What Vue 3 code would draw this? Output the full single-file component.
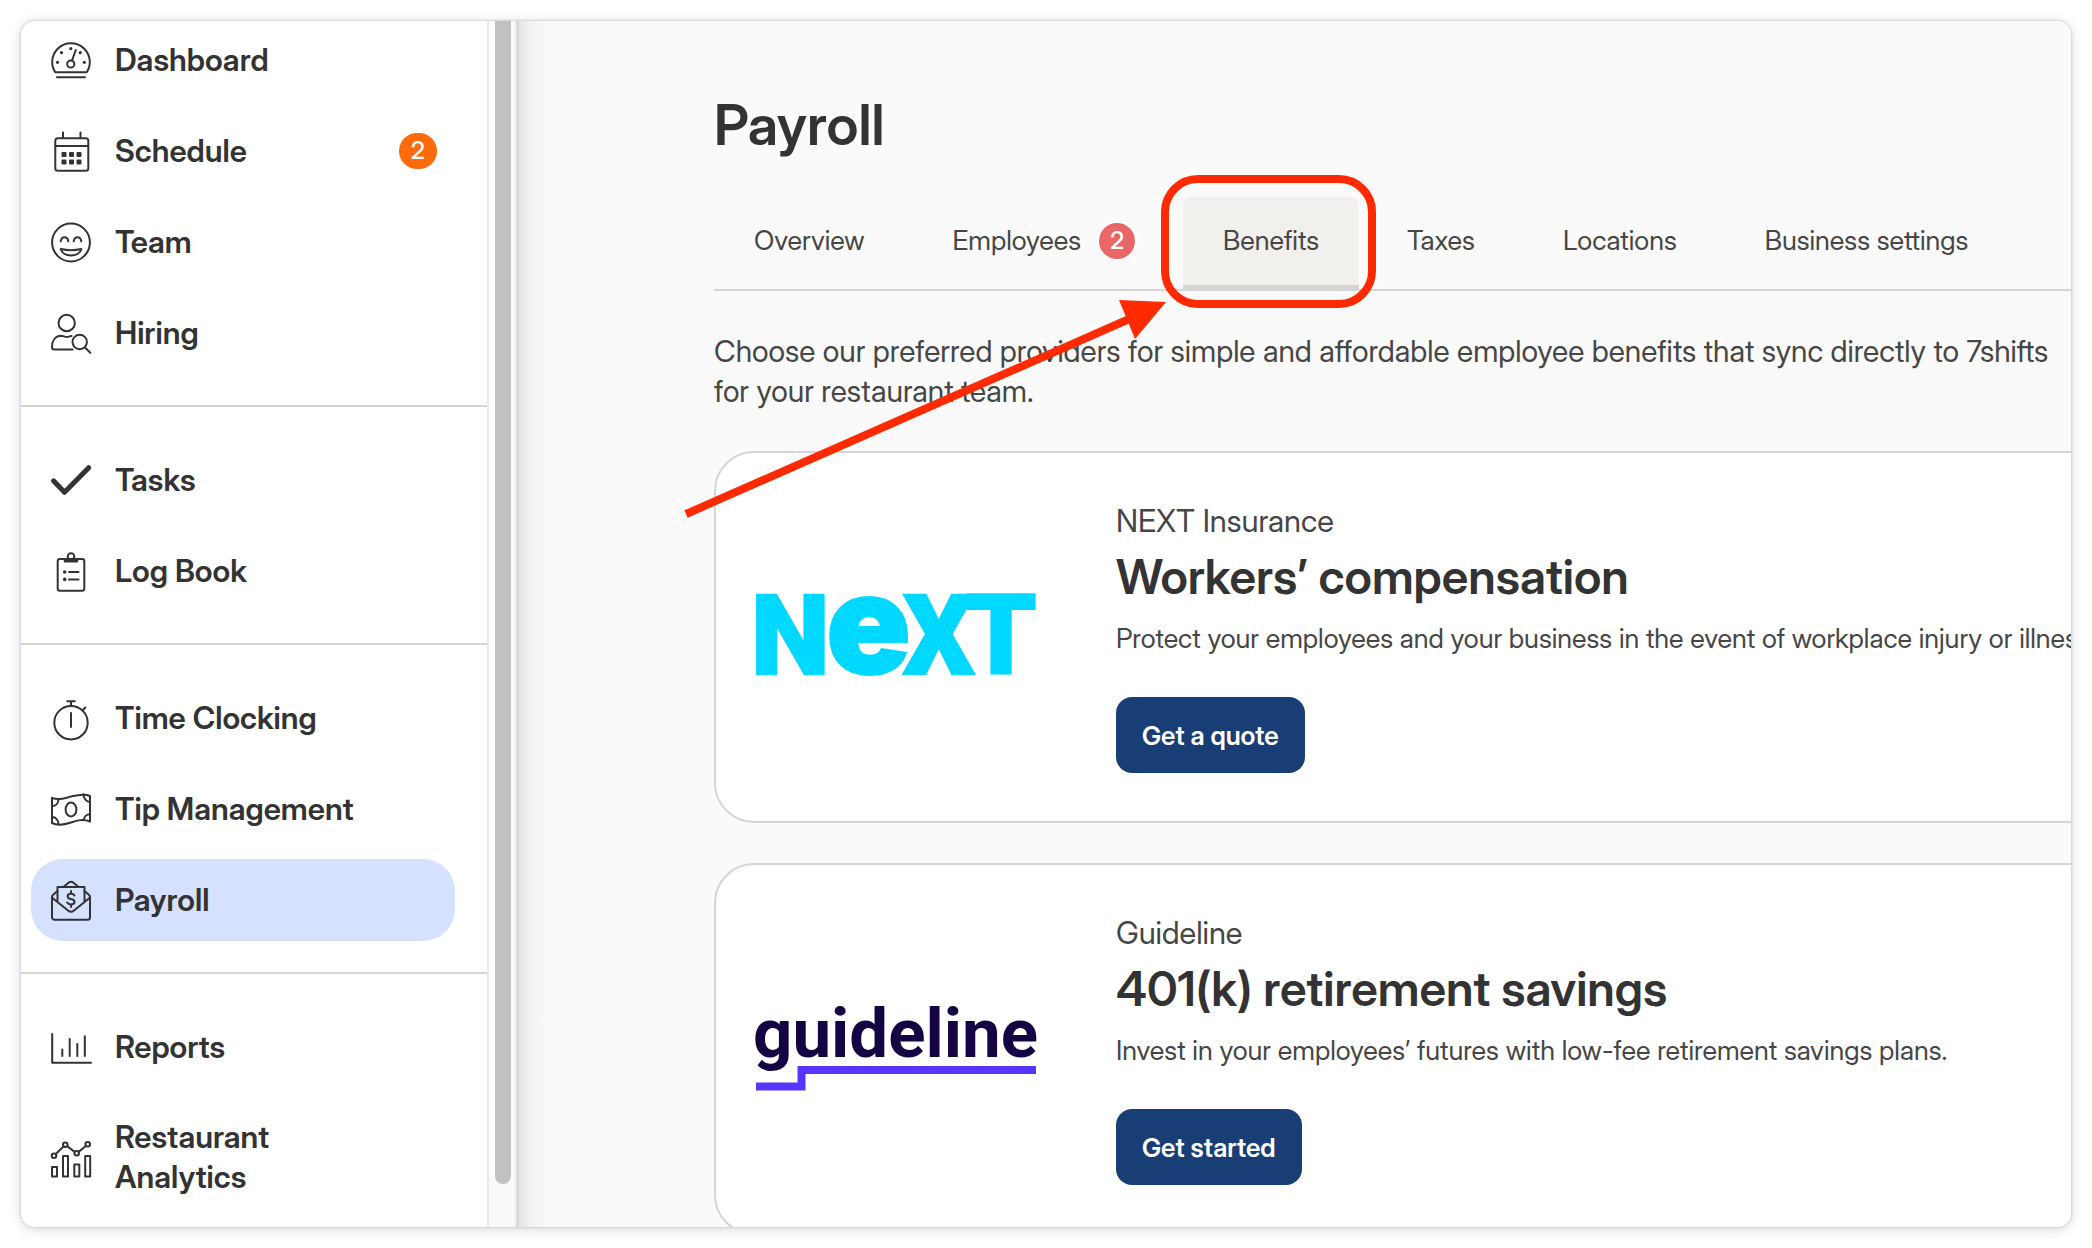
<script setup>
const groups = [
  [
    { label: 'Dashboard', icon: 'dashboard' },
    { label: 'Schedule', icon: 'schedule', badge: 2 },
    { label: 'Team', icon: 'team' },
    { label: 'Hiring', icon: 'hiring' },
  ],
  [
    { label: 'Tasks', icon: 'tasks' },
    { label: 'Log Book', icon: 'log' },
  ],
  [
    { label: 'Time Clocking', icon: 'clock' },
    { label: 'Tip Management', icon: 'tip' },
    { label: 'Payroll', icon: 'payroll', active: true },
  ],
  [
    { label: 'Reports', icon: 'reports' },
    { label: 'Restaurant Analytics', icon: 'analytics' },
  ],
]

const icons = {
  dashboard: `<path d="M4.5 32.3C2.2 29.5 1.2 26 1.2 22a18.8 18.8 0 0 1 37.6 0c0 4-1 7.500-3.300 10.300z"/><path d="M6 37.200h28M21 20.500 24.800 10"/><circle cx="19.800" cy="24" r="3.600"/><g class="solid"><circle cx="6.500" cy="22.300" r="1.600"/><circle cx="10.500" cy="12.700" r="1.600"/><circle cx="19.800" cy="8.700" r="1.600"/><circle cx="29.300" cy="12.700" r="1.600"/><circle cx="33.300" cy="22.300" r="1.600"/></g>`,
  schedule: `<rect x="4.300" y="7.300" width="33" height="32.400" rx="2.500"/><path d="M4.300 15h33M12 1.500v5.500M29.500 1.500v5.500"/><g class="solid"><rect x="10.500" y="21" width="5" height="5" rx="1"/><rect x="18" y="21" width="5" height="5" rx="1"/><rect x="25.500" y="21" width="5" height="5" rx="1"/><rect x="10.500" y="28.500" width="5" height="5" rx="1"/><rect x="18" y="28.500" width="5" height="5" rx="1"/><rect x="25.500" y="28.500" width="5" height="5" rx="1"/></g>`,
  team: `<circle cx="20" cy="20.500" r="18.900"/><path d="M9.700 19.300c.8-5.500 6.800-5.500 7.600 0M22.700 19.300c.8-5.500 6.800-5.500 7.600 0M9.800 27c6.500 1.500 14 1.500 20.500 0-1.500 8.500-19 8.500-20.500 0z"/>`,
  hiring: `<circle cx="15.700" cy="10" r="8.200"/><path d="M21.500 36.500H3.500C2 36.500 1 35.700 1 34.200 1 28 4 23 10 22.800c2.500 0 3.300 1.200 5.700 1.200 2 0 3-.8 4.800-1.100M34 34.500l5.300 5.300"/><circle cx="28.700" cy="29" r="7.200"/>`,
  tasks: `<path class="heavy" d="M2.500 20.800 13.500 32.300 37.700 7.700"/>`,
  log: `<rect x="6.700" y="8" width="26.600" height="31.700" rx="2.200"/><circle cx="20" cy="5.500" r="3.300"/><path class="solid" d="M12.700 7.500h14.600v2.500a1.500 1.500 0 0 1-1.500 1.500H14.200a1.500 1.500 0 0 1-1.500-1.500z"/><path d="M18 21h9.500M18 28.400h9.500"/><g class="solid"><circle cx="13.700" cy="21" r="1.800"/><circle cx="13.700" cy="28.400" r="1.800"/></g>`,
  clock: `<circle cx="20" cy="24.700" r="16.700"/><path d="M16.300 3.300h7.400M20 3.500V8M31.500 12.500l2.800-3M20 15v14"/>`,
  tip: `<path d="M1 8.800C8 12 14 9 20 7.500S33 4 39 7v25.500C32 29.500 26 31.500 20 33.500S7 37 1 34z"/><ellipse cx="20" cy="20.500" rx="5.400" ry="7"/><path d="M7.500 10.500C7.300 14 5 17 1.200 17M32.500 5.200c0 4 3 7.800 6.400 7.800M39 25.300c-3.500 0-6 2.500-6.300 5.700M1.200 28c3.500 0 6.300 3 6.300 7.300"/>`,
  payroll: `<path d="M6.500 11 1.900 15c-.6.600-.9 1.200-.9 2v20.200A2.500 2.500 0 0 0 3.500 39.700h33a2.500 2.500 0 0 0 2.500-2.500V17c0-.8-.3-1.400-.9-2L33.500 11"/><path d="M1.500 18 17 30.500c2 1.700 4 1.700 6 0L38.500 18M6.500 21.500V7h27v14.500M13 6.500l4.500-3.800c1.600-1.300 3.400-1.300 5 0L27 6.500M23.500 15.500c-.6-1.200-1.800-1.700-3.500-1.700-4.300 0-4.600 4.600 0 5.200 4.800.6 4.600 5.400 0 5.400-1.800 0-3.200-.6-3.800-1.900M20 11v2.800M20 24.400v2.600"/>`,
  reports: `<path d="M1.200 7v28.700H40M11.300 22.500v6.500M18.700 12v17M26.300 17v12M33.800 9.300V29"/>`,
  analytics: `<path d="M4.800 17 12.700 9.300M16.200 9.200l7.500 5.700M27.500 14.900l7.400-5.900"/><circle cx="3" cy="18.700" r="2.300"/><circle cx="14.300" cy="7.700" r="2.300"/><circle cx="25.700" cy="16.300" r="2.300"/><circle cx="36.700" cy="7.300" r="2.300"/><path d="M1 30h5v9.500H1zM12 19h5v20.500h-5zM23.300 27.500h5v12h-5zM34.200 19h5v20.500h-5z"/>`,
}

const tabs = [
  { label: 'Overview' },
  { label: 'Employees', badge: 2 },
  { label: 'Benefits', active: true },
  { label: 'Taxes' },
  { label: 'Locations' },
  { label: 'Business settings' },
]

const offers = [
  {
    logo: 'next',
    provider: 'NEXT Insurance',
    title: 'Workers’ compensation',
    text: 'Protect your employees and your business in the event of workplace injury or illness.',
    action: 'Get a quote',
  },
  {
    logo: 'guideline',
    provider: 'Guideline',
    title: '401(k) retirement savings',
    text: 'Invest in your employees’ futures with low-fee retirement savings plans.',
    action: 'Get started',
  },
]
</script>

<template>
  <div class="page">
    <div class="frame">
      <aside class="sidebar">
        <nav class="menu" aria-label="Main">
          <ul v-for="(group, i) in groups" :key="i" class="group">
            <li v-for="item in group" :key="item.label">
              <a href="#" class="item" :class="{ active: item.active }">
                <svg class="icon" viewBox="0 0 40 40" aria-hidden="true" v-html="icons[item.icon]"></svg>
                <span class="label">{{ item.label }}</span>
                <span v-if="item.badge" class="count">{{ item.badge }}</span>
              </a>
            </li>
          </ul>
        </nav>
        <div class="track"><div class="thumb"></div></div>
      </aside>

      <main class="main">
        <h1>Payroll</h1>
        <nav class="tabs" aria-label="Payroll">
          <a v-for="tab in tabs" :key="tab.label" href="#" class="tab" :class="{ current: tab.active }">
            {{ tab.label }}
            <span v-if="tab.badge" class="alert">{{ tab.badge }}</span>
            <span v-if="tab.active" class="ring"></span>
          </a>
        </nav>
        <p class="intro">
          Choose our preferred providers for simple and affordable employee benefits that sync directly to 7shifts<br />
          for your restaurant team.
        </p>

        <section v-for="offer in offers" :key="offer.title" class="card">
          <svg v-if="offer.logo === 'next'" class="logo" viewBox="0 0 280 100" role="img" aria-label="NEXT">
            <text class="next" y="87"><tspan x="-5">N</tspan><tspan class="next-e" x="70">e</tspan><tspan x="147">X</tspan><tspan x="210">T</tspan></text>
          </svg>
          <svg v-else class="logo" viewBox="0 0 280 100" role="img" aria-label="guideline">
            <text class="guideline" x="-3" y="58">guideline</text>
            <path d="M0 87.500H45.500V71H280" fill="none" stroke="#5735ff" stroke-width="8" />
          </svg>
          <div class="details">
            <p class="provider">{{ offer.provider }}</p>
            <h2>{{ offer.title }}</h2>
            <p class="text">{{ offer.text }}</p>
            <button type="button">{{ offer.action }}</button>
          </div>
        </section>
      </main>

      <svg class="arrow" viewBox="0 0 480 216" aria-hidden="true">
        <path d="M0 212 450 14" stroke="#ff2a00" stroke-width="8" />
        <path d="M433 -2 480 0 449 37z" fill="#ff2a00" />
      </svg>
    </div>
  </div>
</template>

<style>
body {
  margin: 0;
  background: #fff;
}
</style>

<style scoped>
.page {
  box-sizing: border-box;
  height: 100vh;
  padding: 21px;
  font-family: "Inter Display", Inter, "Liberation Sans", sans-serif;
  color: #464646;
}

.frame {
  position: relative;
  display: flex;
  height: 100%;
  overflow: hidden;
  border-radius: 14px;
  background: #fafafa;
  box-shadow: 0 0 2px 1px #d0d3d8, 0 2px 12px rgba(60, 70, 90, 0.22);
}

.sidebar {
  display: flex;
  flex: none;
  width: 496px;
  border-right: 2px solid #d5d5d5;
  background: #fff;
}

.menu {
  flex: 1;
  margin-top: -2px;
}

.group {
  display: flex;
  flex-direction: column;
  gap: 9px;
  margin: 0;
  padding: 32px 32px 31px 10px;
  list-style: none;
}

.group:first-child {
  padding-top: 0;
}

.group + .group {
  border-top: 2px solid #d5d5d5;
}

.item {
  box-sizing: border-box;
  display: flex;
  align-items: center;
  gap: 24px;
  min-height: 82px;
  padding: 20px 18px 20px 20px;
  border-radius: 32px;
  color: #333;
  font-size: 31px;
  font-weight: 600;
  line-height: 40px;
  text-decoration: none;
}

.item.active {
  background: #d6e0ff;
}

.icon {
  flex: none;
  width: 40px;
  height: 40px;
  overflow: visible;
  fill: none;
  stroke: #333;
  stroke-width: 2;
  stroke-linecap: round;
  stroke-linejoin: round;
}

.icon :deep(.solid) {
  fill: #333;
  stroke: none;
}

.icon :deep(.heavy) {
  stroke-width: 5;
}

.label {
  max-width: 260px;
  margin-right: auto;
}

.count {
  width: 38px;
  border-radius: 18px;
  background: #ff6a0a;
  color: #fff;
  font-size: 24px;
  font-weight: 500;
  line-height: 36px;
  text-align: center;
}

.track {
  box-sizing: border-box;
  width: 30px;
  padding: 0 4px 43px 6px;
  border: solid #e8e8e8;
  border-width: 0 2px;
  background: #fafafa;
}

.thumb {
  width: 16px;
  height: 100%;
  border-radius: 0 0 8px 8px;
  background: #c1c1c1;
}

.main {
  flex: 1;
  min-width: 0;
  padding: 72px 0 0 195px;
  background: linear-gradient(to right, #e6e6e6, #f2f2f2 12px, #fafafa 32px);
}

h1 {
  margin: 0 0 40px;
  color: #333;
  font-size: 56px;
  font-weight: 600;
  line-height: 64px;
}

.tabs {
  display: flex;
  gap: 8px;
  margin-bottom: 40px;
  border-bottom: 2px solid #d5d5d5;
}

.tab {
  position: relative;
  display: flex;
  align-items: center;
  gap: 18px;
  margin-bottom: -2px;
  padding: 24px 40px;
  border-bottom: 6px solid transparent;
  color: #464646;
  font-size: 27px;
  line-height: 40px;
  text-decoration: none;
  white-space: nowrap;
}

.tab.current {
  border-color: #d5d5d5;
  border-radius: 8px 8px 0 0;
  background: #f1f0ec;
}

.alert {
  width: 36px;
  border-radius: 50%;
  background: #e96767;
  box-shadow: 0 0 0 2px #fff;
  color: #fff;
  font-size: 24px;
  font-weight: 500;
  line-height: 36px;
  text-align: center;
}

/* Callout drawn around the current tab */
.ring {
  position: absolute;
  inset: -22px -17px -23px -22px;
  border: 8px solid #ff2a00;
  border-radius: 37px;
}

.intro {
  margin: 0 0 40px;
  font-size: 30px;
  line-height: 40px;
  white-space: nowrap;
}

.card {
  display: flex;
  align-items: center;
  gap: 80px;
  margin: 0 -80px 40px 0;
  padding: 48px 40px;
  border: 2px solid #d5d5d5;
  border-radius: 40px;
  background: #fff;
}

.logo {
  flex: none;
  width: 280px;
  height: 100px;
  overflow: visible;
}

.next {
  fill: #00d8ff;
  stroke: #00d8ff;
  stroke-width: 2;
  font-family: Roboto, sans-serif;
  font-size: 112px;
  font-weight: 900;
}

.next-e {
  font-family: Inter, sans-serif;
  font-size: 140px;
}

.guideline {
  fill: #150443;
  font-family: Roboto, sans-serif;
  font-size: 69px;
  font-weight: 700;
}

.details {
  white-space: nowrap;
}

.provider {
  margin: 0 0 8px;
  font-size: 31px;
  line-height: 40px;
}

h2 {
  margin: 0 0 14px;
  color: #333;
  font-size: 48px;
  font-weight: 600;
  line-height: 56px;
}

.text {
  margin: 0 0 38px;
  font-size: 27px;
  line-height: 40px;
}

button {
  display: block;
  height: 76px;
  padding: 0 26px;
  border: 0;
  border-radius: 16px;
  background: #193e76;
  color: #fff;
  font-family: inherit;
  font-size: 26px;
  font-weight: 600;
}

/* Callout arrow that points at the current tab */
.arrow {
  position: absolute;
  top: 281px;
  left: 665px;
  width: 480px;
  height: 216px;
  overflow: visible;
}
</style>
